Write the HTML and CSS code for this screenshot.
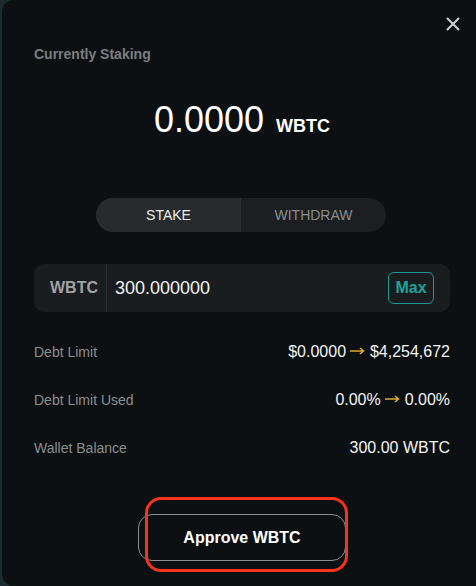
FILE: index.html
```html
<!DOCTYPE html>
<html lang="en">
<head>
  <meta charset="UTF-8" />
  <title>Stake WBTC</title>
  <link rel="stylesheet" href="styles.css">
</head>
<body>
  <div class="modal">
    <button class="close" aria-label="Close">
      <svg width="14" height="14" viewBox="0 0 14 14"><path d="M1.5 1.5 L12.5 12.5 M12.5 1.5 L1.5 12.5" stroke="#cfcfcf" stroke-width="2" stroke-linecap="round"/></svg>
    </button>

    <div class="caption">Currently Staking</div>
    <div class="total">
      <span class="amount">0.0000</span>
      <span class="unit">WBTC</span>
    </div>

    <div class="tabs">
      <div class="tab active">STAKE</div>
      <div class="tab">WITHDRAW</div>
    </div>

    <div class="field">
      <div class="token">WBTC</div>
      <div class="value">300.000000</div>
      <button class="max">Max</button>
    </div>

    <div class="rows">
      <div class="row">
        <span class="label">Debt Limit</span>
        <span class="val">$0.0000 <svg class="arrow" width="15" height="8" viewBox="0 0 15 8"><path d="M0 4 H13 M10 1 L13.5 4 L10 7" stroke="#d9aa3a" stroke-width="1.6" fill="none"/></svg> $4,254,672</span>
      </div>
      <div class="row">
        <span class="label">Debt Limit Used</span>
        <span class="val">0.00% <svg class="arrow" width="15" height="8" viewBox="0 0 15 8"><path d="M0 4 H13 M10 1 L13.5 4 L10 7" stroke="#d9aa3a" stroke-width="1.6" fill="none"/></svg> 0.00%</span>
      </div>
      <div class="row">
        <span class="label">Wallet Balance</span>
        <span class="val">300.00 WBTC</span>
      </div>
    </div>

    <div class="actions">
      <button class="approve">Approve WBTC</button>
      <div class="highlight"></div>
    </div>
  </div>
</body>
</html>
```

FILE: styles.css
```css
body {
  margin: 0;
  background: #1b2b2d;
  font-family: "Liberation Sans", Arial, sans-serif;
  color: #ffffff;
  height: 586px;
  overflow: hidden;
}

.modal {
  position: relative;
  margin-left: 2px;
  height: 586px;
  background: #0c1012;
  border-radius: 12px 0 0 12px;
  padding: 0 26px 0 32px;
  box-sizing: border-box;
}

.close {
  position: absolute;
  top: 17px;
  right: 16px;
  background: none;
  border: none;
  padding: 0;
  cursor: pointer;
}

.caption {
  padding-top: 46px;
  font-size: 14px;
  font-weight: 700;
  color: #7b7e80;
}

.total {
  display: flex;
  justify-content: center;
  align-items: baseline;
  gap: 12px;
  margin-top: 37px;
}

.amount {
  font-size: 36px;
}

.unit {
  font-size: 18px;
  font-weight: 700;
}

.tabs {
  display: flex;
  width: 290px;
  height: 34px;
  margin: 57px auto 0;
  border-radius: 17px;
  overflow: hidden;
  background: #1c1f21;
  transform: translateX(-1px);
}

.tab {
  flex: 1;
  display: flex;
  align-items: center;
  justify-content: center;
  font-size: 14px;
  color: #8a8d8f;
}

.tab.active {
  background: #272b2d;
  color: #ececec;
}

.field {
  display: flex;
  align-items: center;
  height: 48px;
  margin-top: 32px;
  background: #1a1d1f;
  border-radius: 10px;
}

.token {
  width: 64px;
  height: 100%;
  padding-left: 8px;
  display: flex;
  align-items: center;
  justify-content: center;
  border-right: 1px solid #2a2e30;
  font-size: 16px;
  font-weight: 700;
  color: #a0a2a4;
}

.value {
  flex: 1;
  padding-left: 8px;
  font-size: 18px;
  color: #f2f2f2;
}

.max {
  margin-right: 16px;
  width: 46px;
  height: 32px;
  background: transparent;
  border: 1px solid #1a9b95;
  border-radius: 6px;
  color: #1ea39c;
  font-family: inherit;
  font-size: 16px;
  font-weight: 700;
  padding: 0;
}

.rows {
  margin-top: 16px;
}

.row {
  display: flex;
  justify-content: space-between;
  align-items: center;
  height: 48px;
}

.label {
  font-size: 14px;
  color: #8b8d8f;
}

.val {
  font-size: 16px;
  color: #f4f4f4;
}

.arrow {
  vertical-align: 2px;
}

.actions {
  position: relative;
  display: flex;
  justify-content: center;
  margin-top: 42px;
}

.approve {
  width: 208px;
  height: 47px;
  background: transparent;
  border: 1px solid #8c8c8c;
  border-radius: 14px;
  color: #ffffff;
  font-family: inherit;
  font-size: 16px;
  font-weight: 700;
  cursor: pointer;
}

.highlight {
  position: absolute;
  left: 111px;
  top: -17px;
  width: 197px;
  height: 69px;
  border: 3px solid #f7341b;
  border-radius: 16px;
}
```
